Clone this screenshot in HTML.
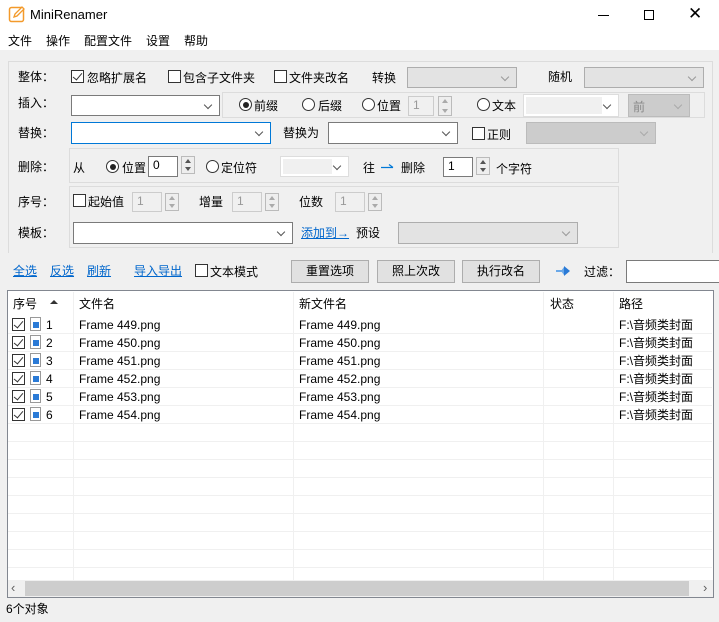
<!DOCTYPE html><html><head><meta charset="utf-8"><style>
*{box-sizing:border-box;margin:0;padding:0}
body{width:719px;height:622px;background:#f0f0f0;font:12px "Liberation Sans","Noto Sans CJK SC",sans-serif;color:#000;position:relative;overflow:hidden}
.a{position:absolute;white-space:nowrap}
.t{line-height:14px}
.cb{position:absolute;width:13px;height:13px;border:1px solid #333;background:#fff}
.cb.k::after{content:"";position:absolute;left:3px;top:0px;width:4px;height:8px;border:solid #333;border-width:0 1.5px 1.5px 0;transform:rotate(40deg)}
.rd{position:absolute;width:13px;height:13px;border:1px solid #333;border-radius:50%;background:#fff}
.rd.k::after{content:"";position:absolute;left:2.5px;top:2.5px;width:6px;height:6px;border-radius:50%;background:#222}
.co{position:absolute;border:1px solid #7a7a7a;background:#fff}
.co::after{content:"";position:absolute;right:8px;top:50%;margin-top:-4px;width:5px;height:5px;border:solid #555;border-width:0 1px 1px 0;transform:rotate(45deg)}
.co.g{background:#e3e3e3;border-color:#adadad}
.co.g::after{border-color:#999}
.co.d{background:#ccc;border-color:#bbb}
.co.d::after{border-color:#aaa}
.sp{position:absolute;border:1px solid #aaa;background:#fff;padding-left:4px;line-height:17px;color:#333}
.sp.g{background:#f0f0f0;color:#999;border-color:#ccc}
.ar{position:absolute;width:14px;border:1px solid #bbb;background:#eee}
.ar::before{content:"";position:absolute;left:3px;top:2px;border:3px solid transparent;border-bottom:4px solid #555;border-top:0}
.ar::after{content:"";position:absolute;left:3px;bottom:2px;border:3px solid transparent;border-top:4px solid #555;border-bottom:0}
.ar.g::before{border-bottom-color:#aaa}.ar.g::after{border-top-color:#aaa}
.grp{position:absolute;border:1px solid #dcdcdc}
.ln{color:#0066cc;text-decoration:underline}
.bt{position:absolute;border:1px solid #adadad;background:#e1e1e1;text-align:center;line-height:21px}
.row{position:absolute;left:8px;width:704px;height:18px;border-bottom:1px solid #f0f0f0}
.vl{position:absolute;width:1px;background:#f0f0f0}
.fi{position:absolute;width:11px;height:14px;border:1px solid #999;background:#fff}
.fi::after{content:"";position:absolute;left:2px;top:4px;width:6px;height:6px;background:#2a7ad6}
</style></head><body>
<div class="a" style="left:0;top:0;width:719px;height:50px;background:#fff"></div>
<svg class="a" style="left:8px;top:5px" width="18" height="18" viewBox="0 0 18 18"><rect x="1.5" y="2.5" width="14" height="14" rx="2" fill="#fff" stroke="#f39a2b" stroke-width="1.5"/><path d="M6 12l1-3 7-7 2 2-7 7z" fill="#fff" stroke="#f39a2b" stroke-width="1.3"/></svg>
<div class="a" style="left:30px;top:6px;font-size:13px;line-height:18px">MiniRenamer</div>
<div class="a" style="left:598px;top:15px;width:11px;height:1px;background:#000"></div>
<div class="a" style="left:644px;top:10px;width:10px;height:10px;border:1px solid #000"></div>
<div class="a" style="left:688px;top:4px;font-size:17px;line-height:20px">✕</div>
<div class="a t" style="left:8px;top:34px">文件</div>
<div class="a t" style="left:46px;top:34px">操作</div>
<div class="a t" style="left:84px;top:34px">配置文件</div>
<div class="a t" style="left:146px;top:34px">设置</div>
<div class="a t" style="left:184px;top:34px">帮助</div>
<div class="a" style="left:8px;top:61px;width:705px;height:192px;border:1px solid #dcdcdc;border-bottom:none"></div>
<div class="a t" style="left:18px;top:70px">整体：</div>
<div class="cb k" style="left:71px;top:70px"></div><div class="a t" style="left:87px;top:71px">忽略扩展名</div>
<div class="cb" style="left:168px;top:70px"></div><div class="a t" style="left:183px;top:71px">包含子文件夹</div>
<div class="cb" style="left:274px;top:70px"></div><div class="a t" style="left:289px;top:71px">文件夹改名</div>
<div class="a t" style="left:372px;top:71px">转换</div>
<div class="co g" style="left:407px;top:67px;width:110px;height:21px"></div>
<div class="a t" style="left:548px;top:70px">随机</div>
<div class="co g" style="left:584px;top:67px;width:120px;height:21px"></div>
<div class="a t" style="left:18px;top:96px">插入：</div>
<div class="co" style="left:71px;top:95px;width:149px;height:21px"></div>
<div class="grp" style="left:222px;top:92px;width:483px;height:26px"></div>
<div class="rd k" style="left:239px;top:98px"></div><div class="a t" style="left:254px;top:99px">前缀</div>
<div class="rd" style="left:302px;top:98px"></div><div class="a t" style="left:318px;top:99px">后缀</div>
<div class="rd" style="left:362px;top:98px"></div><div class="a t" style="left:377px;top:99px">位置</div>
<div class="sp g" style="left:408px;top:96px;width:26px;height:20px">1</div>
<div class="ar g" style="left:438px;top:96px;height:20px"></div>
<div class="rd" style="left:477px;top:98px"></div><div class="a t" style="left:492px;top:99px">文本</div>
<div class="co" style="left:523px;top:94px;width:96px;height:23px;border-color:#ddd"><div style="margin:2px 16px 2px 2px;height:17px;background:#f0f0f0"></div></div>
<div class="co d" style="left:628px;top:94px;width:62px;height:23px"><span style="position:absolute;left:4px;top:3px;color:#888">前</span></div>
<div class="a t" style="left:18px;top:126px">替换：</div>
<div class="co" style="left:71px;top:122px;width:200px;height:22px;border-color:#0078d7"></div>
<div class="a t" style="left:283px;top:126px">替换为</div>
<div class="co" style="left:328px;top:122px;width:130px;height:22px"></div>
<div class="cb" style="left:472px;top:127px"></div><div class="a t" style="left:487px;top:128px">正则</div>
<div class="co d" style="left:526px;top:122px;width:130px;height:22px"></div>
<div class="a t" style="left:18px;top:160px">删除：</div>
<div class="grp" style="left:69px;top:148px;width:550px;height:35px"></div>
<div class="a t" style="left:73px;top:161px">从</div>
<div class="rd k" style="left:106px;top:160px"></div><div class="a t" style="left:122px;top:161px">位置</div>
<div class="sp" style="left:148px;top:156px;width:30px;height:21px;border-color:#7a7a7a;color:#000">0</div>
<div class="ar" style="left:181px;top:156px;height:18px"></div>
<div class="rd" style="left:206px;top:160px"></div><div class="a t" style="left:221px;top:161px">定位符</div>
<div class="co" style="left:280px;top:156px;width:69px;height:21px;border-color:#ddd"><div style="margin:2px 16px 2px 2px;height:15px;background:#f0f0f0"></div></div>
<div class="a t" style="left:363px;top:161px">往</div>
<svg class="a" style="left:380px;top:163px" width="14" height="6"><path d="M1 4.5h12M9 1.5l4 3" stroke="#0078d7" stroke-width="1.2" fill="none"/></svg>
<div class="a t" style="left:401px;top:161px">删除</div>
<div class="sp" style="left:443px;top:157px;width:30px;height:20px;border-color:#7a7a7a;color:#000">1</div>
<div class="ar" style="left:476px;top:157px;height:18px"></div>
<div class="a t" style="left:496px;top:162px">个字符</div>
<div class="a t" style="left:18px;top:195px">序号：</div>
<div class="grp" style="left:69px;top:186px;width:550px;height:62px"></div>
<div class="cb" style="left:73px;top:194px"></div><div class="a t" style="left:88px;top:195px">起始值</div>
<div class="sp g" style="left:132px;top:192px;width:30px;height:20px">1</div><div class="ar g" style="left:165px;top:193px;height:18px"></div>
<div class="a t" style="left:199px;top:195px">增量</div>
<div class="sp g" style="left:232px;top:192px;width:30px;height:20px">1</div><div class="ar g" style="left:265px;top:193px;height:18px"></div>
<div class="a t" style="left:299px;top:195px">位数</div>
<div class="sp g" style="left:335px;top:192px;width:30px;height:20px">1</div><div class="ar g" style="left:368px;top:193px;height:18px"></div>
<div class="a t" style="left:18px;top:226px">模板：</div>
<div class="co" style="left:73px;top:222px;width:220px;height:22px"></div>
<div class="a t ln" style="left:301px;top:226px">添加到→</div>
<div class="a t" style="left:356px;top:226px">预设</div>
<div class="co g" style="left:398px;top:222px;width:180px;height:22px"></div>
<div class="a t ln" style="left:13px;top:264px">全选</div>
<div class="a t ln" style="left:50px;top:264px">反选</div>
<div class="a t ln" style="left:87px;top:264px">刷新</div>
<div class="a t ln" style="left:134px;top:264px">导入导出</div>
<div class="cb" style="left:195px;top:264px"></div><div class="a t" style="left:210px;top:265px">文本模式</div>
<div class="bt" style="left:291px;top:260px;width:78px;height:23px">重置选项</div>
<div class="bt" style="left:377px;top:260px;width:78px;height:23px">照上次改</div>
<div class="bt" style="left:462px;top:260px;width:78px;height:23px">执行改名</div>
<svg class="a" style="left:555px;top:265px" width="16" height="12"><path d="M1 6h9" stroke="#6aa8e8" stroke-width="2"/><path d="M9 1v10l6-5z" fill="#2a7ad6"/><path d="M9 2l-3 4 3 4z" fill="#6aa8e8"/></svg>
<div class="a t" style="left:584px;top:265px">过滤：</div>
<div class="a" style="left:626px;top:260px;width:100px;height:23px;border:1px solid #7a7a7a;background:#fff"></div>
<div class="a" style="left:7px;top:290px;width:707px;height:308px;border:1px solid #828790;background:#fff"></div>
<div class="a t" style="left:13px;top:297px">序号</div>
<div class="a" style="left:50px;top:300px;border:4px solid transparent;border-bottom:4px solid #333;border-top:0"></div>
<div class="a t" style="left:79px;top:297px">文件名</div>
<div class="a t" style="left:299px;top:297px">新文件名</div>
<div class="a t" style="left:550px;top:297px">状态</div>
<div class="a t" style="left:619px;top:297px">路径</div>
<div class="vl" style="left:73px;top:292px;height:288px"></div>
<div class="vl" style="left:293px;top:292px;height:288px"></div>
<div class="vl" style="left:543px;top:292px;height:288px"></div>
<div class="vl" style="left:613px;top:292px;height:288px"></div>
<div id="rows"></div>
<div class="a" style="left:8px;top:580px;width:705px;height:17px;background:#f0f0f0"></div>
<div class="a" style="left:25px;top:581px;width:664px;height:15px;background:#cdcdcd"></div>
<div class="a" style="left:11px;top:580px;color:#606060;font-size:13px">‹</div>
<div class="a" style="left:703px;top:580px;color:#606060;font-size:13px">›</div>
<div class="a t" style="left:6px;top:602px">6个对象</div>
<script>
var h='';for(var i=0;i<15;i++){var y=316+i*18;h+='<div class="row" style="top:'+y+'px"></div>';if(i<6){var n=449+i;h+='<div class="cb k" style="left:12px;top:'+(y+2)+'px"></div><div class="fi" style="left:30px;top:'+(y+1)+'px"></div><div class="a t" style="left:46px;top:'+(y+2)+'px">'+(i+1)+'</div><div class="a t" style="left:79px;top:'+(y+2)+'px">Frame '+n+'.png</div><div class="a t" style="left:299px;top:'+(y+2)+'px">Frame '+n+'.png</div><div class="a t" style="left:619px;top:'+(y+2)+'px">F:\\音频类封面</div>';}}
document.getElementById('rows').outerHTML=h;
</script>
</body></html>
